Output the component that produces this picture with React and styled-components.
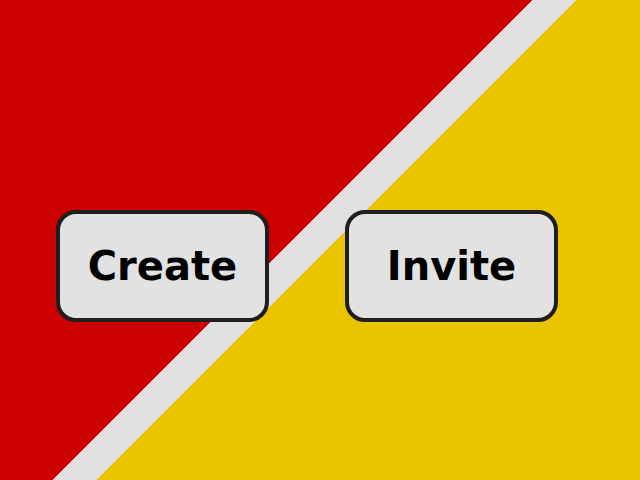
import React from "react";
import styled, { createGlobalStyle } from "styled-components";

const Global = createGlobalStyle`
  html, body { margin: 0; padding: 0; }
  body { font-family: "DejaVu Sans", sans-serif; }
`;

const Stage = styled.div`
  width: 640px;
  height: 480px;
  box-sizing: border-box;
  background: linear-gradient(
    135deg,
    #cc0000 0px,
    #cc0000 376.5px,
    #e0e0e0 376.5px,
    #e0e0e0 407.5px,
    #ebc400 407.5px,
    #ebc400 100%
  );
  display: flex;
  align-items: flex-start;
  gap: 76px;
  padding: 210px 0 0 56px;
`;

const Button = styled.button`
  width: 213px;
  height: 112px;
  box-sizing: border-box;
  border: 4px solid #1e1e1e;
  border-radius: 20px;
  background: #e2e2e2;
  color: #000;
  font-family: "DejaVu Sans", sans-serif;
  font-weight: bold;
  font-size: 40px;
  display: flex;
  align-items: center;
  justify-content: center;
  padding: 0;
  cursor: pointer;
`;

export default function App() {
  return (
    <>
      <Global />
      <Stage>
        <Button>Create</Button>
        <Button>Invite</Button>
      </Stage>
    </>
  );
}
